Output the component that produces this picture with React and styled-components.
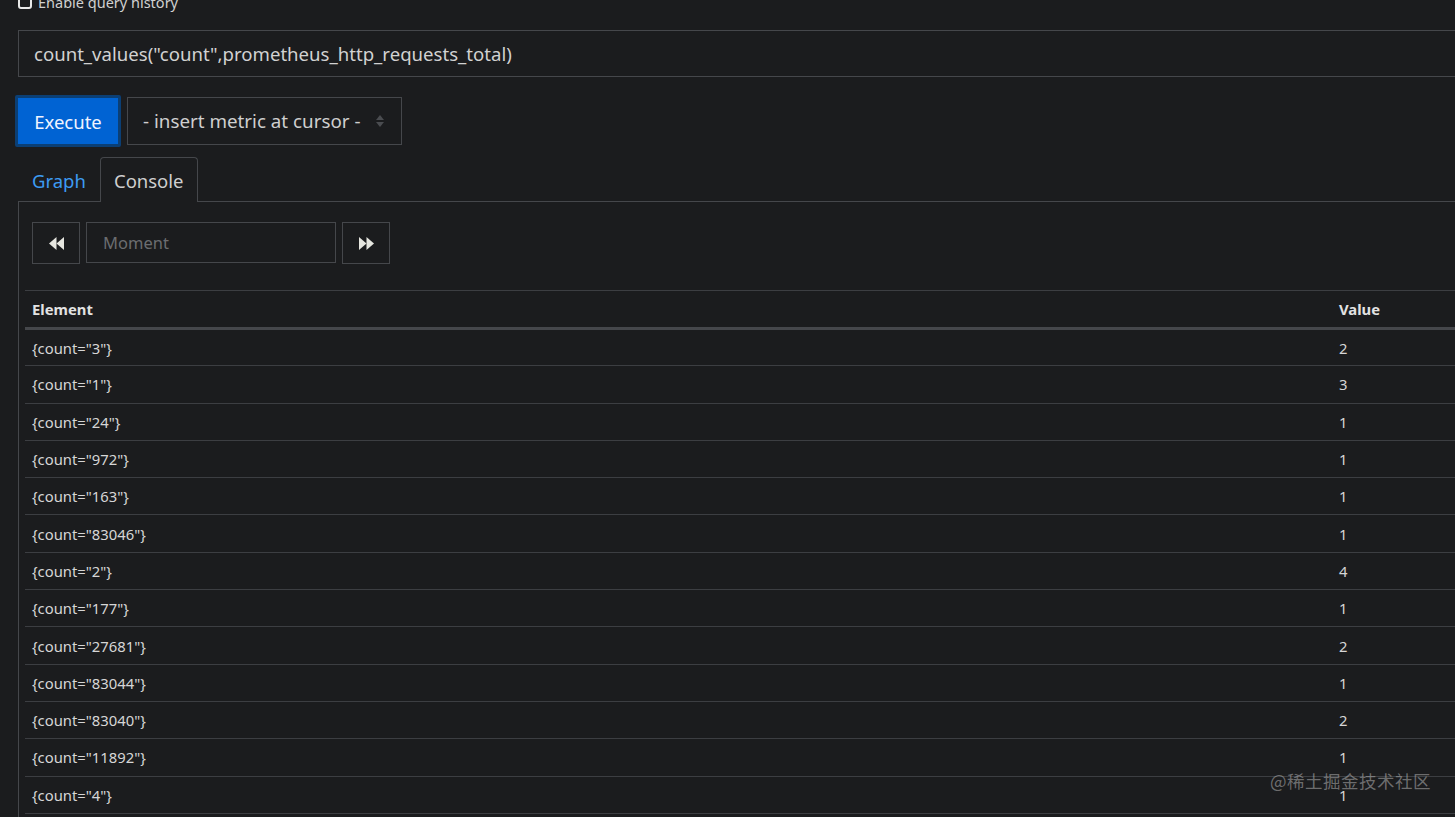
import React from "react";
import styled, { createGlobalStyle } from "styled-components";

const Global = createGlobalStyle`
  html, body { margin: 0; padding: 0; background: #1b1c1e; }
  body { font-family: "Noto Sans", "Noto Sans CJK SC", sans-serif; color: #d4d4d4; overflow: hidden; }
  * { box-sizing: border-box; }
`;

const Page = styled.div`
  width: 1455px;
  height: 817px;
  position: relative;
  overflow: hidden;
  padding-left: 18px;
`;

const HistoryRow = styled.label`
  display: flex;
  align-items: center;
  gap: 6px;
  height: 16px;
  margin-top: -6px;
  font-size: 14.5px;
  color: #d0d0d0;
`;

const Check = styled.span`
  width: 14px;
  height: 14px;
  border: 2px solid #e8e8e8;
  border-radius: 3px;
  background: #1b1c1e;
  display: inline-block;
`;

const QueryBox = styled.div`
  margin-top: 20px;
  height: 47px;
  border: 1px solid #45474b;
  border-right: none;
  display: flex;
  align-items: center;
  padding-left: 15px;
  font-size: 18.6px;
  color: #d2d2d2;
  background: #1b1c1e;
`;

const Actions = styled.div`
  display: flex;
  align-items: center;
  gap: 6px;
  margin-top: 18px;
  margin-left: -3px;
`;

const ExecuteButton = styled.button`
  width: 106px;
  height: 52px;
  border: 3px solid #0b3f75;
  background: #0063d3;
  color: #f0f4ff;
  font-family: inherit;
  font-size: 18.5px;
  padding: 0;
  border-radius: 2px;
`;

const Select = styled.div`
  width: 275px;
  height: 48px;
  border: 1px solid #45474b;
  display: flex;
  align-items: center;
  justify-content: space-between;
  padding: 0 16px 0 15px;
  font-size: 18.8px;
  color: #cfcfcf;
`;

const Arrows = styled.svg`
  width: 10px;
  height: 16px;
`;

const Tabs = styled.div`
  display: flex;
  align-items: flex-end;
  margin-top: 8px;
  height: 46px;
`;

const Tab = styled.div`
  height: 45px;
  display: flex;
  align-items: center;
  padding: 0 13px;
  font-size: 18.5px;
  color: ${(p) => (p.$active ? "#cfcfcf" : "#3d9bf2")};
  border: 1px solid ${(p) => (p.$active ? "#45474b" : "transparent")};
  border-bottom: none;
  border-radius: 4px 4px 0 0;
  background: ${(p) => (p.$active ? "#1b1c1e" : "transparent")};
  position: relative;
  top: 1px;
`;

const Panel = styled.div`
  border-top: 1px solid #45474b;
  border-left: 1px solid #45474b;
  padding: 18px 0 0 6px;
`;

const Nav = styled.div`
  display: flex;
  align-items: center;
  gap: 6px;
  margin-left: 7px;
`;

const NavButton = styled.div`
  width: 48px;
  height: 42px;
  border: 1px solid #45474b;
  display: flex;
  align-items: center;
  justify-content: center;
  margin-top: 2px;
`;

const MomentInput = styled.div`
  width: 250px;
  height: 41px;
  border: 1px solid #45474b;
  display: flex;
  align-items: center;
  padding-left: 16px;
  font-size: 16.5px;
  color: #6b6d70;
`;

const Table = styled.table`
  margin-top: 26px;
  width: 100%;
  border-collapse: collapse;
  font-size: 14.8px;
  color: #d6d6d6;
  border-top: 1px solid #3c3e42;
`;

const Th = styled.th`
  text-align: left;
  font-weight: 700;
  height: 38px;
  padding: 0 0 0 7px;
  border-bottom: 3px solid #45474b;
  color: #e2e2e2;
  width: ${(p) => p.$w || "auto"};
`;

const Td = styled.td`
  height: 37.3px;
  padding: 0 0 0 7px;
  border-bottom: 1px solid #3c3e42;
`;

const Watermark = styled.div`
  position: absolute;
  right: 24px;
  top: 768px;
  font-size: 17.5px;
  color: rgba(180, 180, 180, 0.55);
  font-family: "Noto Sans CJK SC", sans-serif;
  letter-spacing: 0.5px;
`;

const rows = [
  ["3", 2], ["1", 3], ["24", 1], ["972", 1], ["163", 1], ["83046", 1], ["2", 4],
  ["177", 1], ["27681", 2], ["83044", 1], ["83040", 2], ["11892", 1], ["4", 1], ["5", 1],
];

const Rewind = () => (
  <svg width="17" height="15" viewBox="0 0 17 15">
    <path d="M8.5 1 L1 7.5 L8.5 14 Z" fill="#e6e6e0" />
    <path d="M16 1 L8.5 7.5 L16 14 Z" fill="#e6e6e0" />
  </svg>
);
const Forward = () => (
  <svg width="17" height="15" viewBox="0 0 17 15">
    <path d="M1 1 L8.5 7.5 L1 14 Z" fill="#e6e6e0" />
    <path d="M8.5 1 L16 7.5 L8.5 14 Z" fill="#e6e6e0" />
  </svg>
);

export default function App() {
  return (
    <Page>
      <Global />
      <HistoryRow>
        <Check />
        Enable query history
      </HistoryRow>
      <QueryBox>count_values("count",prometheus_http_requests_total)</QueryBox>
      <Actions>
        <ExecuteButton>Execute</ExecuteButton>
        <Select>
          <span>- insert metric at cursor -</span>
          <Arrows viewBox="0 0 10 16">
            <path d="M1 7 L5 2 L9 7 Z" fill="#4a4c50" />
            <path d="M1 9 L5 14 L9 9 Z" fill="#4a4c50" />
          </Arrows>
        </Select>
      </Actions>
      <Tabs>
        <Tab>Graph</Tab>
        <Tab $active>Console</Tab>
      </Tabs>
      <Panel>
        <Nav>
          <NavButton><Rewind /></NavButton>
          <MomentInput>Moment</MomentInput>
          <NavButton><Forward /></NavButton>
        </Nav>
        <Table>
          <thead>
            <tr>
              <Th>Element</Th>
              <Th $w="123px">Value</Th>
            </tr>
          </thead>
          <tbody>
            {rows.map(([k, v], i) => (
              <tr key={i}>
                <Td>{`{count="${k}"}`}</Td>
                <Td>{v}</Td>
              </tr>
            ))}
          </tbody>
        </Table>
      </Panel>
      <Watermark>@稀土掘金技术社区</Watermark>
    </Page>
  );
}
